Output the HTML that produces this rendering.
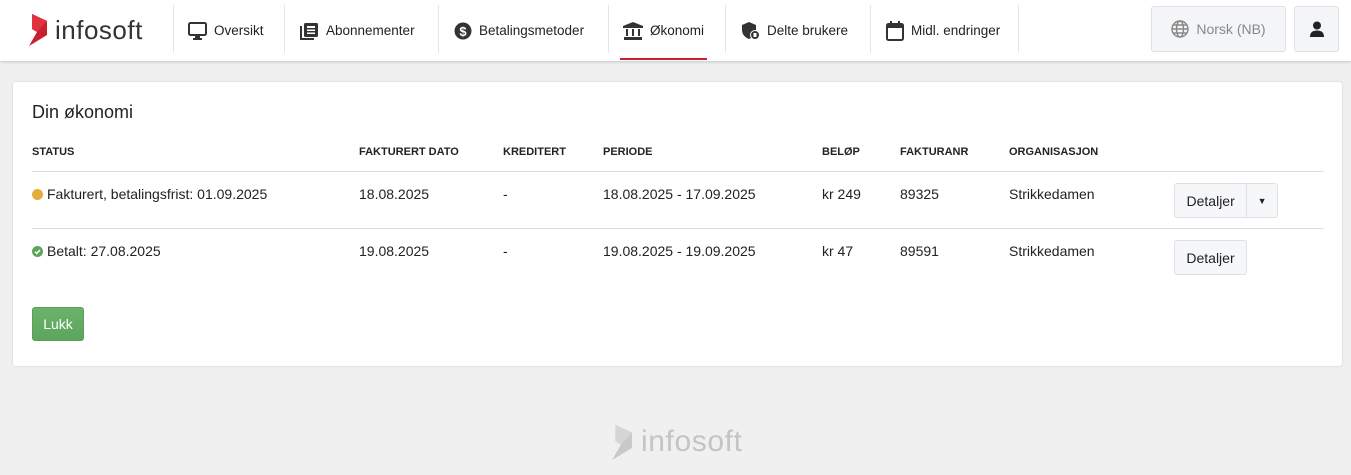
<!DOCTYPE html>
<html><head><meta charset="utf-8"><style>
*{box-sizing:border-box;margin:0;padding:0}
body{width:1351px;height:475px;background:#f0f0f0;font-family:"Liberation Sans",sans-serif;color:#222;font-size:14px;position:relative;overflow:hidden}
.hdr{position:absolute;left:0;top:0;width:1351px;height:61px;background:#fff;box-shadow:0 1px 3px rgba(0,0,0,.18)}
.sep{position:absolute;top:5px;width:1px;height:48px;background:#e6e6e6}
.tab{position:absolute;top:0;height:61px;display:flex;align-items:center;font-size:13.5px;color:#222}
.tab svg{margin-right:7px}
.card{position:absolute;left:13px;top:82px;width:1329px;height:284px;background:#fff;border-radius:3px;box-shadow:0 0 2px rgba(0,0,0,.15)}
.a{position:absolute;white-space:nowrap}
.th{font-size:11px;font-weight:bold;top:64px}
.line{position:absolute;left:19px;width:1292px;height:1px;background:#ddd}
.btn{position:absolute;background:#f6f7f9;border:1px solid #dde0e4;border-radius:3px;font-size:14px;display:flex;align-items:center;justify-content:center;color:#222}
</style></head><body>
<div class="hdr">
 <svg style="position:absolute;left:28px;top:14px" width="20" height="33" viewBox="0 0 20 33"><path d="M4 0L19 7V21L1 32L9 18L4 15Z" fill="#c8202f"/><path d="M4 0L4 15L9 18L19 7Z" fill="#e0313d"/></svg>
 <div class="a" style="left:55px;top:15px;font-size:26px;color:#333;letter-spacing:.5px">infosoft</div>
 <div class="sep" style="left:173px"></div><div class="sep" style="left:284px"></div><div class="sep" style="left:438px"></div><div class="sep" style="left:608px"></div><div class="sep" style="left:725px"></div><div class="sep" style="left:870px"></div><div class="sep" style="left:1018px"></div>
 <div class="tab" style="left:188px"><svg width="19" height="18" viewBox="0 0 19 18"><rect x="1" y="1" width="17" height="12" rx="1.5" fill="none" stroke="#333" stroke-width="2"/><rect x="7" y="14" width="5" height="2" fill="#333"/><rect x="5" y="16" width="9" height="2" fill="#333"/></svg>Oversikt</div>
 <div class="tab" style="left:300px"><svg width="19" height="18" viewBox="0 0 19 18"><path d="M1 4V17H14" fill="none" stroke="#333" stroke-width="2"/><rect x="4" y="1" width="14" height="14" rx="1.5" fill="#333"/><rect x="7" y="4" width="8" height="2" fill="#fff"/><rect x="7" y="7.5" width="8" height="1.5" fill="#fff"/><rect x="7" y="10.5" width="8" height="1.5" fill="#fff"/></svg>Abonnementer</div>
 <div class="tab" style="left:454px"><svg width="18" height="18" viewBox="0 0 18 18"><circle cx="9" cy="9" r="8.5" fill="#333"/><text x="9" y="14" font-size="13" font-weight="bold" fill="#fff" text-anchor="middle" font-family="Liberation Sans">$</text></svg>Betalingsmetoder</div>
 <div class="tab" style="left:623px"><svg width="20" height="18" viewBox="0 0 20 18"><path d="M10 0L20 4V6H0V4Z" fill="#333"/><rect x="3" y="7" width="2" height="7" fill="#333"/><rect x="9" y="7" width="2" height="7" fill="#333"/><rect x="15" y="7" width="2" height="7" fill="#333"/><rect x="1" y="15" width="18" height="3" fill="#333"/></svg>Økonomi</div>
 <div style="position:absolute;left:620px;top:58px;width:87px;height:2px;background:#c8202f"></div>
 <div class="tab" style="left:741px"><svg width="19" height="18" viewBox="0 0 19 18"><path d="M8 0L15 3V8C15 13 11 16 8 17C5 16 1 13 1 8V3Z" fill="#333"/><circle cx="14" cy="13" r="4.5" fill="#333" stroke="#fff" stroke-width="1"/><rect x="12.5" y="11" width="3" height="4" fill="#fff"/></svg>Delte brukere</div>
 <div class="tab" style="left:886px"><svg width="18" height="20" viewBox="0 0 18 20"><rect x="1" y="3" width="16" height="16" rx="1.5" fill="none" stroke="#333" stroke-width="2"/><rect x="1" y="3" width="16" height="4" fill="#333"/><rect x="4" y="0" width="2" height="4" fill="#333"/><rect x="12" y="0" width="2" height="4" fill="#333"/></svg>Midl. endringer</div>
 <div class="btn" style="left:1151px;top:6px;width:135px;height:46px;color:#888;background:#f4f5f7"><svg width="18" height="18" viewBox="0 0 18 18" style="margin-right:7px"><g fill="none" stroke="#888" stroke-width="1.4"><circle cx="9" cy="9" r="8"/><ellipse cx="9" cy="9" rx="3.5" ry="8"/><path d="M1 9H17M2.5 5H15.5M2.5 13H15.5"/></g></svg>Norsk (NB)</div>
 <div class="btn" style="left:1294px;top:6px;width:45px;height:46px;background:#f4f5f7"><svg width="14" height="16" viewBox="0 0 14 16"><circle cx="7" cy="4.5" r="4" fill="#222"/><path d="M0 16C0 11 3 9.5 7 9.5S14 11 14 16Z" fill="#222"/></svg></div>
</div>
<div class="card">
 <div class="a" style="left:19px;top:20px;font-size:18px;color:#222">Din økonomi</div>
 <div class="a th" style="left:19px">STATUS</div>
 <div class="a th" style="left:346px">FAKTURERT DATO</div>
 <div class="a th" style="left:490px">KREDITERT</div>
 <div class="a th" style="left:590px">PERIODE</div>
 <div class="a th" style="left:809px">BELØP</div>
 <div class="a th" style="left:887px">FAKTURANR</div>
 <div class="a th" style="left:996px">ORGANISASJON</div>
 <div class="line" style="top:89px"></div>
 <div class="line" style="top:146px"></div>
 <div class="a" style="left:19px;top:104px"><span style="display:inline-block;width:11px;height:11px;border-radius:50%;background:#e3ac3c;margin-right:4px;vertical-align:-1px"></span>Fakturert, betalingsfrist: 01.09.2025</div>
 <div class="a" style="left:346px;top:104px">18.08.2025</div>
 <div class="a" style="left:490px;top:104px">-</div>
 <div class="a" style="left:590px;top:104px">18.08.2025 - 17.09.2025</div>
 <div class="a" style="left:809px;top:104px">kr 249</div>
 <div class="a" style="left:887px;top:104px">89325</div>
 <div class="a" style="left:996px;top:104px">Strikkedamen</div>
 <div class="btn" style="left:1161px;top:101px;width:104px;height:35px;justify-content:flex-start"><span style="width:72px;text-align:center">Detaljer</span><span style="width:1px;height:33px;background:#dde0e4"></span><span style="width:30px;text-align:center;font-size:9px">▼</span></div>
 <div class="a" style="left:19px;top:161px"><svg width="11" height="11" viewBox="0 0 11 11" style="margin-right:4px;vertical-align:-1px"><circle cx="5.5" cy="5.5" r="5.5" fill="#5ca55c"/><path d="M3 5.7L4.8 7.4L8 4" fill="none" stroke="#fff" stroke-width="1.6"/></svg>Betalt: 27.08.2025</div>
 <div class="a" style="left:346px;top:161px">19.08.2025</div>
 <div class="a" style="left:490px;top:161px">-</div>
 <div class="a" style="left:590px;top:161px">19.08.2025 - 19.09.2025</div>
 <div class="a" style="left:809px;top:161px">kr 47</div>
 <div class="a" style="left:887px;top:161px">89591</div>
 <div class="a" style="left:996px;top:161px">Strikkedamen</div>
 <div class="btn" style="left:1161px;top:158px;width:73px;height:35px">Detaljer</div>
 <div class="btn" style="left:19px;top:225px;width:52px;height:34px;background:linear-gradient(#6db26a,#5ca55c);border-color:#58a058;color:#fff">Lukk</div>
</div>
<svg style="position:absolute;left:611px;top:424px" width="22" height="38" viewBox="0 0 20 33"><path d="M4 0L19 7V21L1 32L9 18L4 15Z" fill="#c9c9c9"/><path d="M4 0L4 15L9 18L19 7Z" fill="#d6d6d6"/></svg>
<div class="a" style="left:641px;top:425px;font-size:30px;color:#c4c4c4;letter-spacing:.6px">infosoft</div>
</body></html>
